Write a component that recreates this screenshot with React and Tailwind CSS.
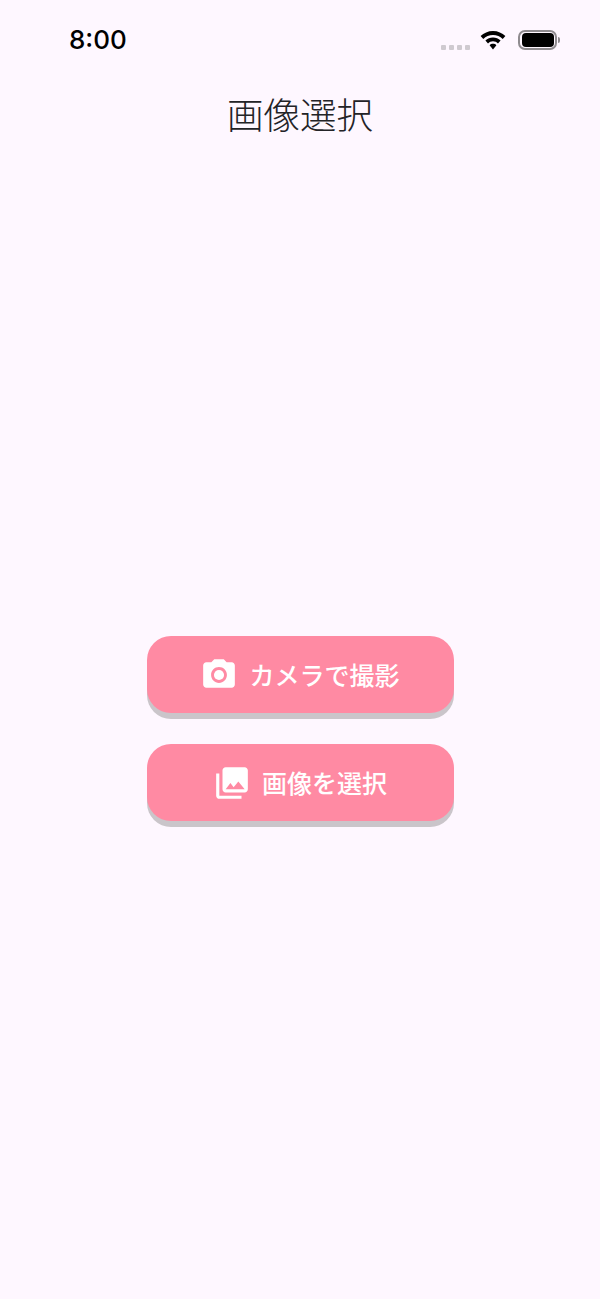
import React from "react";
import { MdPhotoCamera, MdPhotoLibrary } from "react-icons/md";

const cjk = "font-['Noto_Sans_CJK_JP','Noto_Sans',sans-serif]";

function ActionButton({ icon, label }) {
  return (
    <button className="flex h-[77px] w-[307px] items-center justify-center gap-[11px] rounded-[24px] bg-[#ff8aa3] text-white shadow-[0_6px_0_#cac5ca]">
      {icon}
      <span className={`${cjk} text-[25px] font-medium leading-none`}>{label}</span>
    </button>
  );
}

export default function App() {
  return (
    <div className="flex h-[1299px] w-[600px] flex-col bg-[#fef7ff]">
      <div className="flex h-[80px] items-center justify-between pl-[69px] pr-[40px]">
        <span className="font-['Inter',sans-serif] text-[26px] font-medium leading-none text-black">8:00</span>
        <div className="flex items-center">
          <div className="mt-[15px] flex gap-[3px]">
            <i className="h-[5px] w-[5px] rounded-[1px] bg-[#cfcad0]" />
            <i className="h-[5px] w-[5px] rounded-[1px] bg-[#cfcad0]" />
            <i className="h-[5px] w-[5px] rounded-[1px] bg-[#cfcad0]" />
            <i className="h-[5px] w-[5px] rounded-[1px] bg-[#cfcad0]" />
          </div>
          <svg width="26" height="20" viewBox="0 0 26 20" className="ml-[10px] mr-[12px]">
            <path d="M13 1C8.100 1 3.800 3 .6 6.100L3.300 9C5.800 6.500 9.200 5 13 5s7.200 1.500 9.700 4l2.700-2.900C22.200 3 17.900 1 13 1z" fill="#000" />
            <path d="M13 7.500C10.100 7.500 7.500 8.600 5.400 10.600L8 13.400C9.400 12.100 11.100 11.300 13 11.300s3.600.8 5 2.100l2.600-2.800C18.500 8.600 15.900 7.500 13 7.500z" fill="#000" />
            <path d="M13 13.800c-1.300 0-2.500.5-3.400 1.400L13 19.500l3.400-4.300c-.9-.9-2.100-1.400-3.400-1.400z" fill="#000" />
          </svg>
          <div className="flex items-center gap-[1px]">
            <div className="flex h-[20px] w-[39px] items-center justify-center rounded-[7px] border-2 border-[#8f8b8f]">
              <div className="h-[14px] w-[32px] rounded-[4px] bg-black" />
            </div>
            <div className="h-[6px] w-[2px] rounded-r-full bg-[#8f8b8f]" />
          </div>
        </div>
      </div>
      <h1 className={`${cjk} mt-[8px] text-center text-[36.5px] font-light leading-[52px] text-[#232327]`}>画像選択</h1>
      <div className="mt-[496px] flex flex-col items-center gap-[31px]">
        <ActionButton icon={<MdPhotoCamera size={38} />} label="カメラで撮影" />
        <ActionButton icon={<MdPhotoLibrary size={38} />} label="画像を選択" />
      </div>
    </div>
  );
}
